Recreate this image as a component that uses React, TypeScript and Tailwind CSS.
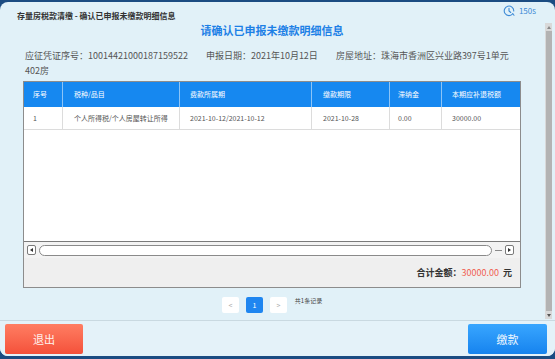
import React from "react";

const cols = [
  { w: "w-[39px]", pl: "pl-[9px]", head: "序号", cell: "1" },
  { w: "w-[117px]", pl: "pl-[11px]", head: "税种/品目", cell: "个人所得税/个人房屋转让所得" },
  { w: "w-[132px]", pl: "pl-[10px]", head: "费款所属期", cell: "2021-10-12/2021-10-12" },
  { w: "w-[78px]", pl: "pl-[11px]", head: "缴款期限", cell: "2021-10-28" },
  { w: "w-[52px]", pl: "pl-[8px]", head: "滞纳金", cell: "0.00" },
  { w: "w-[78px]", pl: "pl-[10px]", head: "本期应补退税额", cell: "30000.00" },
];

const ClockIcon = () => (
  <svg width="12" height="12" viewBox="0 0 24 24" fill="none" stroke="#3d8ad6" strokeWidth="2.2" strokeLinecap="round">
    <path d="M19.5 17.5A9.5 9.5 0 1 1 21.5 12" />
    <path d="M12 6.5V12l3.5 3" />
    <path d="M19.5 17.5l2.5 3" />
  </svg>
);

const ArrowBox = ({ dir }: { dir: "left" | "right" }) => (
  <div className="w-[9px] h-[10px] border border-[#7a7a7a] rounded-[2px] bg-white flex items-center justify-center">
    <div
      className={
        dir === "left"
          ? "w-0 h-0 border-y-[2.5px] border-y-transparent border-r-[3px] border-r-[#333]"
          : "w-0 h-0 border-y-[2.5px] border-y-transparent border-l-[3px] border-l-[#333]"
      }
    />
  </div>
);

const DetailTable = () => (
  <div className="mt-[3px] h-[207px] border border-[#8c8c8c] bg-white flex flex-col">
    {/* header */}
    <div className="flex h-[25px] bg-[#1688f0] text-white text-[7px]">
      {cols.map((c, i) => (
        <div
          key={c.head}
          className={`${c.w} ${c.pl} flex items-center ${i < cols.length - 1 ? "border-r border-[#8cc4f7]" : ""}`}
        >
          {c.head}
        </div>
      ))}
    </div>
    {/* row */}
    <div className="flex h-[23px] text-[#555] text-[7px] border-b border-[#dcdcdc]">
      {cols.map((c, i) => (
        <div
          key={c.head}
          className={`${c.w} ${c.pl} flex items-center ${i < cols.length - 1 ? "border-r border-[#dcdcdc]" : ""}`}
        >
          {c.cell}
        </div>
      ))}
    </div>
    <div className="flex-1" />
    {/* horizontal scrollbar */}
    <div className="h-[17px] border-t border-[#7a7a7a] bg-[#f3f3f3] flex items-center pl-[3px] pr-[6px] gap-[3px]">
      <ArrowBox dir="left" />
      <div className="flex-1 h-[11px] rounded-full border border-[#8a8a8a] bg-white" />
      <div className="w-[7px] h-px bg-[#8a8a8a]" />
      <ArrowBox dir="right" />
    </div>
    <div className="h-[29px] bg-[#efefef] flex items-center justify-end pr-[8px] text-[9px] font-bold text-[#333]">
      <span>合计金额：</span>
      <span className="text-[#f0604f] font-normal">30000.00</span>
      <span className="ml-[4px]">元</span>
    </div>
  </div>
);

const Pager = () => (
  <div className="mt-[9px] flex justify-center items-start gap-[7px] text-[7px]">
    <div className="w-[17px] h-[16px] bg-white rounded-[2px] flex items-center justify-center text-[#aaa]">&lt;</div>
    <div className="w-[17px] h-[16px] bg-[#1f86f0] rounded-[2px] flex items-center justify-center text-white">1</div>
    <div className="w-[17px] h-[16px] bg-white rounded-[2px] flex items-center justify-center text-[#aaa]">&gt;</div>
    <div className="text-[6px] text-[#444] -mt-[1px] ml-[1px]">共1条记录</div>
  </div>
);

const VScroll = () => (
  <div className="w-[7px] mr-[3px] mt-[1px] h-[296px] bg-[#d9d9d9] flex flex-col items-center">
    <div className="h-[8px] flex items-center">
      <div className="w-0 h-0 border-x-[2px] border-x-transparent border-b-[3px] border-b-[#888]" />
    </div>
    <div className="flex-1 w-[6px] bg-[#b3b3b3]" />
    <div className="h-[8px] flex items-center">
      <div className="w-0 h-0 border-x-[2px] border-x-transparent border-t-[3px] border-t-[#555]" />
    </div>
  </div>
);

export default function App() {
  return (
    <div
      className="w-[555px] h-[359px] bg-[#1b4c82] pt-[2px] overflow-hidden"
      style={{ fontFamily: '"Noto Sans CJK SC", "Noto Sans", sans-serif' }}
    >
      <div className="h-[354px] rounded-[8px] bg-[#e1f1f8] flex flex-col">
        {/* top bar */}
        <div className="h-[20px] flex justify-between items-start">
          <div className="ml-[17px] mt-[9px] text-[8px] leading-[10px] font-bold text-[#333]">
            存量房税款清缴 - 确认已申报未缴款明细信息
          </div>
          <div className="mr-[19px] mt-[3px] flex items-center gap-[4px] text-[8px] text-[#3d8ad6]">
            <ClockIcon />
            <span>150s</span>
          </div>
        </div>

        {/* body */}
        <div className="h-[298px] flex">
          <div className="flex-1 pl-[23px] pr-[24px]">
            <h1 className="mt-px text-center text-[11px] leading-[14px] font-bold text-[#1c80e6]">
              请确认已申报未缴款明细信息
            </h1>
            <div className="mt-[11px] pl-[2px] text-[9px] leading-[15px] text-[#555]">
              <div className="whitespace-nowrap">
                <span>应征凭证序号：10014421000187159522</span>
                <span className="ml-[18px]">申报日期：2021年10月12日</span>
                <span className="ml-[18px]">房屋地址：珠海市香洲区兴业路397号1单元</span>
              </div>
              <div>402房</div>
            </div>
            <DetailTable />
            <Pager />
          </div>
          <VScroll />
        </div>

        {/* footer */}
        <div className="flex-1 border-t border-[#c9d9e1] bg-[#e4f2f9] rounded-b-[8px] flex justify-between items-start pt-[3px] pl-[5px] pr-[8px]">
          <button className="w-[78px] h-[30px] rounded-[2px] bg-gradient-to-b from-[#ff7d62] to-[#f4503a] text-[11px] text-[#fff2ee]">
            退出
          </button>
          <button className="w-[79px] h-[30px] rounded-[2px] bg-gradient-to-b from-[#38a6ff] to-[#1583ee] text-[11px] text-[#eef7ff]">
            缴款
          </button>
        </div>
      </div>
    </div>
  );
}
